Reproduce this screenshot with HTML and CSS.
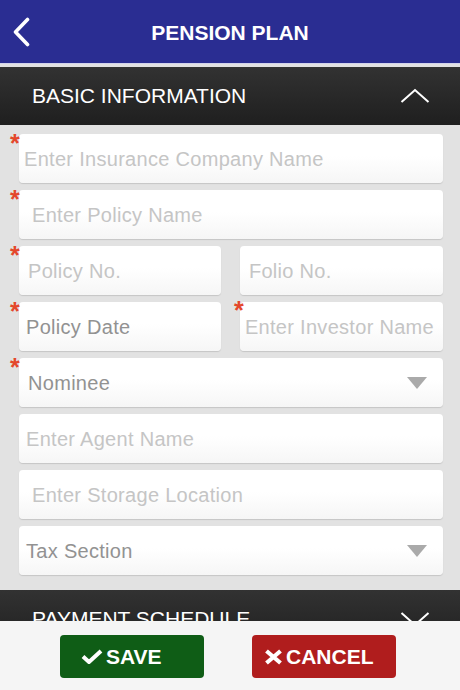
FILE: index.html
```html
<!DOCTYPE html>
<html lang="en">
<head>
  <meta charset="UTF-8">
  <title>Pension Plan</title>
  <link rel="stylesheet" href="styles.css">
</head>
<body>

<div class="topbar">
  <a class="back" href="#">
    <svg width="20" height="30" viewBox="0 0 20 30"><polyline points="15.5,2.5 3.5,15 15.5,27.5" fill="none" stroke="#fff" stroke-width="3.6" stroke-linecap="round" stroke-linejoin="round"/></svg>
  </a>
  <h1>PENSION PLAN</h1>
</div>

<div class="section-head">
  <span>BASIC INFORMATION</span>
  <svg width="30" height="16" viewBox="0 0 30 16"><polyline points="1.5,14 15,2 28.5,14" fill="none" stroke="#fff" stroke-width="2"/></svg>
</div>

<div class="form">
  <div class="field wide pad-s"><i class="req">*</i><span>Enter Insurance Company Name</span></div>
  <div class="field wide pad-l"><i class="req">*</i><span>Enter Policy Name</span></div>
  <div class="field"><i class="req">*</i><span>Policy No.</span></div>
  <div class="field"><span>Folio No.</span></div>
  <div class="field pad-m"><i class="req">*</i><span class="value">Policy Date</span></div>
  <div class="field pad-s"><i class="req right">*</i><span>Enter Investor Name</span></div>
  <div class="field wide select"><i class="req">*</i><span class="value">Nominee</span><b class="caret"></b></div>
  <div class="field wide pad-m"><span>Enter Agent Name</span></div>
  <div class="field wide pad-l"><span>Enter Storage Location</span></div>
  <div class="field wide select pad-m"><span class="value">Tax Section</span><b class="caret"></b></div>
</div>

<div class="section-head">
  <span>PAYMENT SCHEDULE</span>
  <svg width="30" height="16" viewBox="0 0 30 16"><polyline points="1.5,2 15,14 28.5,2" fill="none" stroke="#fff" stroke-width="2"/></svg>
</div>

<div class="footer">
  <button class="btn save">
    <svg width="22" height="15" viewBox="0 0 22 15"><polyline points="2,7.5 8,13 20,2" fill="none" stroke="#fff" stroke-width="4"/></svg>
    SAVE
  </button>
  <button class="btn cancel">
    <svg width="19" height="16" viewBox="0 0 19 16"><path d="M2.5 2 L16.5 14 M16.5 2 L2.5 14" fill="none" stroke="#fff" stroke-width="4.2"/></svg>CANCEL
  </button>
</div>

</body>
</html>
```

FILE: styles.css
```css
body {
  margin: 0;
  font-family: "Liberation Sans", Arial, sans-serif;
  background: #e2e2e2;
}
.topbar {
  height: 63px;
  background: #2a2d92;
  border-bottom: 1px solid #d2d3ec;
  display: flex;
  align-items: center;
  justify-content: center;
  position: relative;
}
.topbar h1 {
  margin: 0;
  padding-top: 2px;
  font-size: 21px;
  font-weight: bold;
  color: #fff;
}
.back {
  position: absolute;
  left: 12px;
  top: 17px;
  display: block;
  line-height: 0;
}
.section-head {
  margin-top: 3px;
  height: 58px;
  padding: 0 30px 0 32px;
  background: linear-gradient(#323232, #1f1f1f);
  color: #fff;
  font-size: 21px;
  display: flex;
  align-items: center;
  justify-content: space-between;
}
.form {
  padding: 9px 17px 12px 19px;
  display: grid;
  grid-template-columns: 1fr 1fr;
  gap: 7px 19px;
}
.field {
  position: relative;
  height: 49px;
  padding: 1px 9px 0;
  box-sizing: border-box;
  border-radius: 4px;
  background: linear-gradient(#fff 45%, #f6f6f6);
  box-shadow: 0 1px 1px rgba(0, 0, 0, 0.13);
  display: flex;
  align-items: center;
  font-size: 20px;
  letter-spacing: 0.3px;
  color: #c5c5c5;
  white-space: nowrap;
}
.field.wide {
  grid-column: span 2;
}
.field.pad-s {
  padding-left: 5px;
}
.field.pad-m {
  padding-left: 7px;
}
.field.pad-l {
  padding-left: 13px;
}
.field .value {
  color: #929292;
}
.req {
  position: absolute;
  left: -9px;
  top: -3px;
  font-style: normal;
  font-weight: bold;
  font-size: 25px;
  line-height: 1;
  color: #e4472b;
}
.req.right {
  left: -6px;
  top: -4px;
}
.select {
  justify-content: space-between;
  padding-right: 16px;
}
.caret {
  width: 0;
  height: 0;
  border-left: 10px solid transparent;
  border-right: 10px solid transparent;
  border-top: 12px solid #aaaaaa;
}
.footer {
  position: fixed;
  left: 0;
  right: 0;
  bottom: 0;
  height: 69px;
  box-sizing: border-box;
  padding: 14px 0 0 60px;
  background: #f5f5f5;
  display: flex;
  gap: 48px;
  align-items: flex-start;
}
.btn {
  width: 144px;
  height: 43px;
  border: none;
  border-radius: 4px;
  font-family: inherit;
  font-size: 21px;
  font-weight: bold;
  color: #fff;
  display: flex;
  align-items: center;
  gap: 3px;
  cursor: pointer;
}
.save {
  background: #0f5d16;
  padding-left: 21px;
}
.cancel {
  background: #b01d1d;
  padding-left: 12px;
}
```
